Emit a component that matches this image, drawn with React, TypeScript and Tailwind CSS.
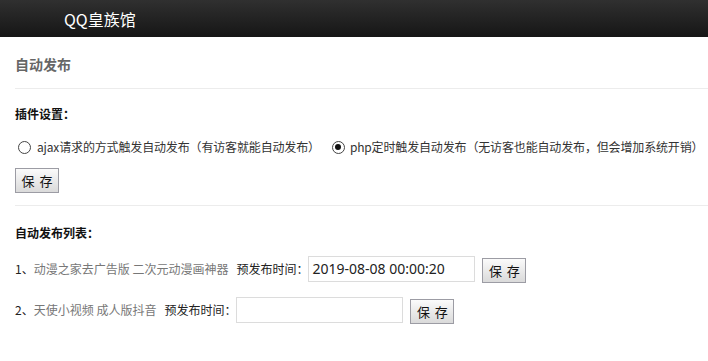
import React from "react";

const rows = [
  { no: "1", title: "动漫之家去广告版 二次元动漫画神器", time: "2019-08-08 00:00:20" },
  { no: "2", title: "天使小视频 成人版抖音", time: "" },
];

function SaveButton({ className = "" }: { className?: string }) {
  return (
    <button
      className={`h-[25px] w-[44px] border border-[#9c9ca4] bg-linear-to-b from-[#fbfbfb] to-[#dadada] pl-[1px] text-[13px] leading-none tracking-[1px] text-[#111] ${className}`}
    >
      保 存
    </button>
  );
}

function Radio({ checked }: { checked?: boolean }) {
  return (
    <span className="flex h-[13px] w-[13px] shrink-0 items-center justify-center rounded-full border border-[#444] bg-white">
      {checked && <span className="h-[6px] w-[6px] rounded-full bg-[#111]" />}
    </span>
  );
}

export default function App() {
  return (
    <div className="min-h-[361px] w-[708px] overflow-hidden bg-white font-['Noto_Sans_CJK_SC',sans-serif] text-[12px] text-[#222]">
      <div className="flex h-[37px] items-center bg-linear-to-b from-[#303030] to-[#161616] pl-[64px] text-[16px] text-white">
        QQ皇族馆
      </div>

      <div className="pl-[15px]">
        <div className="flex h-[52px] items-center border-b border-[#ececec] pt-[3px] text-[14px] font-bold text-[#666]">
          自动发布
        </div>

        <div className="mt-[15px] leading-[20px] font-bold text-[#111]">插件设置：</div>

        <div className="mt-[13px] flex items-center whitespace-nowrap leading-[20px] tracking-[-0.15px] text-[#333]">
          <span className="ml-[3px]">
            <Radio />
          </span>
          <span className="ml-[6px]">ajax请求的方式触发自动发布（有访客就能自动发布）</span>
          <span className="ml-[12px]">
            <Radio checked />
          </span>
          <span className="ml-[5px]">php定时触发自动发布（无访客也能自动发布，但会增加系统开销）</span>
        </div>

        <div className="mt-[11px] border-b border-[#ececec] pb-[12px]">
          <SaveButton className="w-[43px]" />
        </div>

        <div className="mt-[17px] leading-[20px] font-bold text-[#111]">自动发布列表：</div>

        {rows.map((r, i) => (
          <div key={r.no} className={`flex items-center ${i === 0 ? "mt-[11px]" : "mt-[12px]"}`}>
            <span className="text-[#222]">{r.no}、</span>
            <span className="text-[#777]">{r.title}</span>
            <span className="ml-[8px] text-[#222]">预发布时间：</span>
            <input
              readOnly
              value={r.time}
              className="h-[26px] w-[167px] border border-[#dcdcdc] pl-[3px] font-['Noto_Sans',sans-serif] text-[14px] text-[#222] outline-none"
            />
            <SaveButton className="ml-[7px] mt-[4px]" />
          </div>
        ))}
      </div>
    </div>
  );
}
